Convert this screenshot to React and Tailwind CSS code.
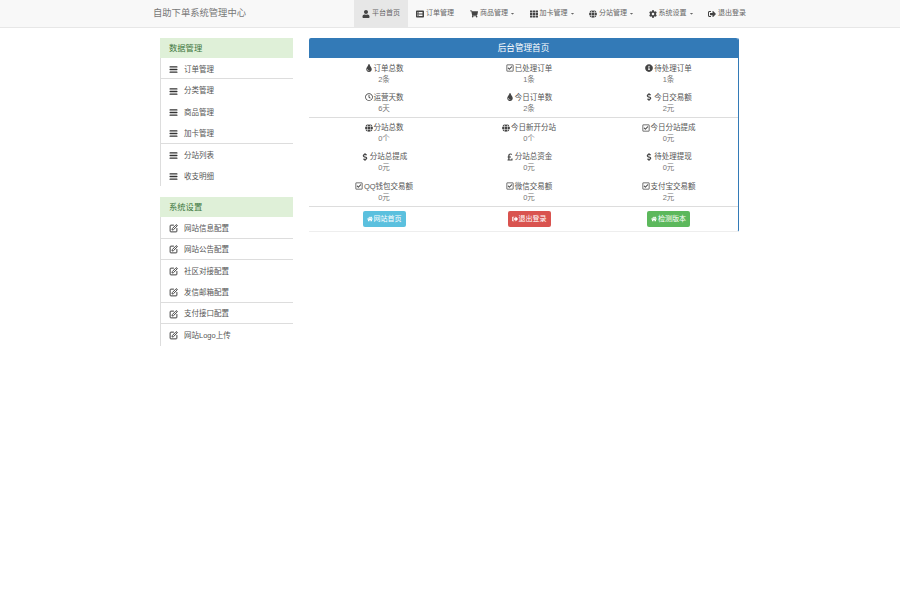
import React from 'react';
import { AlignJustify, SquarePen } from 'lucide-react';
import {
  FaUser, FaListAlt, FaShoppingCart, FaTh, FaGlobe, FaCog, FaSignOutAlt, FaCaretDown,
  FaTint, FaRegCheckSquare, FaInfoCircle, FaRegClock, FaDollarSign, FaPoundSign, FaHome,
} from 'react-icons/fa';

const navItems = [
  { label: '平台首页', icon: FaUser, active: true },
  { label: '订单管理', icon: FaListAlt },
  { label: '商品管理', icon: FaShoppingCart, caret: true },
  { label: '加卡管理', icon: FaTh, caret: true },
  { label: '分站管理', icon: FaGlobe, caret: true },
  { label: '系统设置', icon: FaCog, caret: true },
  { label: '退出登录', icon: FaSignOutAlt },
];

const dataLinks = [
  { label: '订单管理', line: true },
  { label: '分类管理' },
  { label: '商品管理' },
  { label: '加卡管理', line: true },
  { label: '分站列表' },
  { label: '收支明细' },
];

const systemLinks = [
  { label: '网站信息配置', line: true },
  { label: '网站公告配置', line: true },
  { label: '社区对接配置' },
  { label: '发信邮箱配置', line: true },
  { label: '支付接口配置', line: true },
  { label: '网站Logo上传' },
];

const statGroups = [
  [
    { label: '订单总数', value: '2条', icon: FaTint },
    { label: '已处理订单', value: '1条', icon: FaRegCheckSquare },
    { label: '待处理订单', value: '1条', icon: FaInfoCircle },
    { label: '运营天数', value: '6天', icon: FaRegClock },
    { label: '今日订单数', value: '2条', icon: FaTint },
    { label: '今日交易额', value: '2元', icon: FaDollarSign },
  ],
  [
    { label: '分站总数', value: '0个', icon: FaGlobe },
    { label: '今日新开分站', value: '0个', icon: FaGlobe },
    { label: '今日分站提成', value: '0元', icon: FaRegCheckSquare },
    { label: '分站总提成', value: '0元', icon: FaDollarSign },
    { label: '分站总资金', value: '0元', icon: FaPoundSign },
    { label: '待处理提现', value: '0元', icon: FaDollarSign },
    { label: 'QQ钱包交易额', value: '0元', icon: FaRegCheckSquare },
    { label: '微信交易额', value: '0元', icon: FaRegCheckSquare },
    { label: '支付宝交易额', value: '2元', icon: FaRegCheckSquare },
  ],
];

function SideGroup({ title, links, icon: Icon, strokeWidth }) {
  return (
    <div>
      <div className="h-5 flex items-center pl-[9px] bg-[#dff0d8] text-[#3c763d] text-[8.3px]">{title}</div>
      <div className="border-l border-[#ddd]">
        {links.map((link) => (
          <div
            key={link.label}
            className={`h-[21.4px] pt-[2px] flex items-center pl-2 text-[7.5px] text-[#555] ${link.line ? 'border-b border-[#ddd]' : ''}`}
          >
            <Icon size={9} strokeWidth={strokeWidth} className="mr-[6px] text-[#333]" />
            {link.label}
          </div>
        ))}
      </div>
    </div>
  );
}

export default function App() {
  return (
    <div className="min-h-[594px] bg-white font-['Liberation_Sans','Noto_Sans_CJK_SC',sans-serif]">
      <nav className="h-7 bg-[#f8f8f8] border-b border-[#e7e7e7]">
        <div className="w-[600px] mx-auto flex">
          <div className="w-[204px] shrink-0 h-[27px] pl-[3px] flex items-center text-[9.3px] text-[#777]">自助下单系统管理中心</div>
          <ul className="flex shrink-0">
            {navItems.map((item) => (
              <li
                key={item.label}
                className={`h-[27px] pl-2 flex items-center shrink-0 whitespace-nowrap text-[7px] text-[#666] ${item.caret ? 'pr-[6.5px]' : 'pr-2'} ${item.active ? 'bg-[#e7e7e7] text-[#555]' : ''}`}
              >
                <item.icon size={8} className="mr-[2px] text-[#444]" />
                {item.label}
                {item.caret && <FaCaretDown size={5} className="ml-[2px]" />}
              </li>
            ))}
          </ul>
        </div>
      </nav>

      <div className="w-[600px] mx-auto pl-[10px] pt-[10px] flex gap-4 items-start">
        <aside className="w-[133px] flex flex-col gap-[11px]">
          <SideGroup title="数据管理" links={dataLinks} icon={AlignJustify} strokeWidth={3.5} />
          <SideGroup title="系统设置" links={systemLinks} icon={SquarePen} strokeWidth={2.5} />
        </aside>

        <main className="w-[430px] border-r border-b border-r-[#337ab7] border-b-[#eee] rounded-t-[2px] rounded-br-[2px]">
          <div className="h-5 flex items-center justify-center bg-[#337ab7] text-white text-[8.6px] rounded-t-[2px]">后台管理首页</div>
          {statGroups.map((group, i) => (
            <div key={i} className={`grid grid-cols-[150px_140px_139px] border-b border-[#ddd] ${i === 1 ? 'pb-[1px]' : ''}`}>
              {group.map((stat) => (
                <div key={stat.label} className="h-[29.3px] pt-[4.5px] text-center text-[7.5px] leading-[11px] text-[#666]">
                  <div className="flex items-center justify-center text-[#555]">
                    <stat.icon size={8} className="mr-[1px] text-[#444]" />
                    {stat.label}
                  </div>
                  <div className="text-[#777]">{stat.value}</div>
                </div>
              ))}
            </div>
          ))}
          <div className="grid grid-cols-[150px_140px_139px] h-[24px] pt-1 justify-items-center">
            <button className="w-[43px] h-4 rounded-[2px] bg-[#5bc0de] text-white text-[7px] flex items-center justify-center">
              <FaHome size={6} className="mr-[1px]" />网站首页
            </button>
            <button className="w-[43px] h-4 rounded-[2px] bg-[#d9534f] text-white text-[7px] flex items-center justify-center">
              <FaSignOutAlt size={6} className="mr-[1px]" />退出登录
            </button>
            <button className="w-[43px] h-4 rounded-[2px] bg-[#5cb85c] text-white text-[7px] flex items-center justify-center">
              <FaHome size={6} className="mr-[1px]" />检测版本
            </button>
          </div>
        </main>
      </div>
    </div>
  );
}
